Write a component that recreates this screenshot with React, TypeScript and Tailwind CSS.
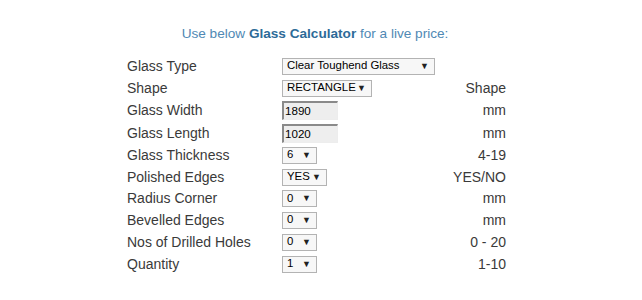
import React from 'react';

type Row = {
  label: string;
  kind: 'select' | 'input';
  value: string;
  width: string;
  unit: string;
  h: string;
};

const rows: Row[] = [
  { label: 'Glass Type', kind: 'select', value: 'Clear Toughend Glass', width: 'w-[153px]', unit: '', h: 'h-[22px]' },
  { label: 'Shape', kind: 'select', value: 'RECTANGLE', width: 'w-[90px]', unit: 'Shape', h: 'h-[22px]' },
  { label: 'Glass Width', kind: 'input', value: '1890', width: 'w-[56px]', unit: 'mm', h: 'h-[23px]' },
  { label: 'Glass Length', kind: 'input', value: '1020', width: 'w-[56px]', unit: 'mm', h: 'h-[22px]' },
  { label: 'Glass Thickness', kind: 'select', value: '6', width: 'w-[35px]', unit: '4-19', h: 'h-[22px]' },
  { label: 'Polished Edges', kind: 'select', value: 'YES', width: 'w-[45px]', unit: 'YES/NO', h: 'h-[22px]' },
  { label: 'Radius Corner', kind: 'select', value: '0', width: 'w-[35px]', unit: 'mm', h: 'h-[21px]' },
  { label: 'Bevelled Edges', kind: 'select', value: '0', width: 'w-[35px]', unit: 'mm', h: 'h-[22px]' },
  { label: 'Nos of Drilled Holes', kind: 'select', value: '0', width: 'w-[35px]', unit: '0 - 20', h: 'h-[22px]' },
  { label: 'Quantity', kind: 'select', value: '1', width: 'w-[35px]', unit: '1-10', h: 'h-[22px]' },
];

const App: React.FC = () => {
  return (
    <div className="w-[642px] h-[300px] bg-white font-['Liberation_Sans',Arial,sans-serif] overflow-hidden">
      {/* Heading */}
      <div className="pt-[24px] pr-[12px] h-[55px] text-center text-[13.6px] text-[#5089b4]">
        Use below <span className="font-bold text-[#2d6b98]">Glass Calculator</span> for a live price:
      </div>

      {/* Calculator */}
      <div className="ml-[127px] w-[379px]">
        {rows.map((r) => (
          <div key={r.label} className={`flex items-center ${r.h}`}>
            <div className="w-[155px] text-[14px] text-[#3a3a3a]">{r.label}</div>
            <div className="flex-1">
              {r.kind === 'select' ? (
                <div
                  className={`${r.width} h-[17px] flex items-center justify-between border border-[#b3b3b3] bg-[#f7f7f7] pl-[4px] pr-[5px] text-[11.4px] leading-none text-black`}
                >
                  <span>{r.value}</span>
                  <span className="text-[9px] text-[#222]">▼</span>
                </div>
              ) : (
                <div
                  className={`${r.width} h-[19px] flex items-center border-t-2 border-l-2 border-t-[#8a8a8a] border-l-[#8a8a8a] border-r border-b border-r-[#ededed] border-b-[#ededed] bg-[#eeeeee] pl-[1px] text-[11.6px] leading-none text-black`}
                >
                  {r.value}
                </div>
              )}
            </div>
            <div className="text-right text-[14px] text-[#3a3a3a]">{r.unit}</div>
          </div>
        ))}
      </div>
    </div>
  );
};

export default App;
